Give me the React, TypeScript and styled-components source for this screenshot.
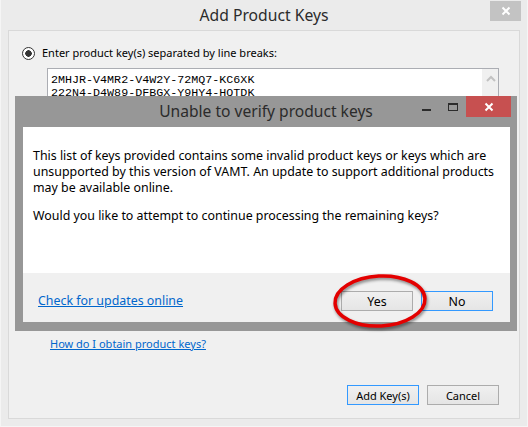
import styled, { createGlobalStyle } from "styled-components";

const GlobalStyle = createGlobalStyle`
  html, body {
    margin: 0;
    padding: 0;
    background: #ebebeb;
  }
  body {
    font-family: "Noto Sans", "Open Sans", sans-serif;
    color: #000;
  }
`;

const keys = ["2MHJR-V4MR2-V4W2Y-72MQ7-KC6XK", "222N4-D4W89-DFBGX-Y9HY4-HQTDK"];

export default function App() {
  return (
    <>
      <GlobalStyle />
      <Window>
        <TitleBar>
          <span />
          <Title>Add Product Keys</Title>
          <OuterClose>
            <CloseGlyph />
          </OuterClose>
        </TitleBar>
        <Client>
          <RadioRow>
            <Radio />
            <Label>Enter product key(s) separated by line breaks:</Label>
          </RadioRow>
          <KeyBox>
            <KeyText>
              {keys.map((k) => (
                <div key={k}>{k}</div>
              ))}
            </KeyText>
            <ScrollBar>
              <svg width="16" height="16" viewBox="0 0 16 16">
                <polyline points="5,10 9,6 13,10" fill="none" stroke="#c2c2c2" strokeWidth="2" />
              </svg>
            </ScrollBar>
          </KeyBox>
          <HelpLink>How do I obtain product keys?</HelpLink>
          <ButtonRow>
            <Button $focused>Add Key(s)</Button>
            <Button>Cancel</Button>
          </ButtonRow>
        </Client>

        <Modal>
          <ModalTitleBar>
            <span />
            <ModalTitle>Unable to verify product keys</ModalTitle>
            <Caption>
              <CaptionButton $w={27}>
                <svg width="27" height="21" viewBox="0 0 27 21">
                  <rect x="9" y="13" width="9" height="2" fill="#2b2b2b" />
                </svg>
              </CaptionButton>
              <CaptionButton $w={26}>
                <svg width="26" height="21" viewBox="0 0 26 21">
                  <rect x="8.5" y="7.5" width="9" height="7" fill="none" stroke="#2b2b2b" strokeWidth="1" />
                  <rect x="8" y="7" width="10" height="2" fill="#2b2b2b" />
                </svg>
              </CaptionButton>
              <CaptionButton $w={45} $close>
                <CloseGlyph />
              </CaptionButton>
            </Caption>
          </ModalTitleBar>
          <ModalBody>
            <Paragraph>
              This list of keys provided contains some invalid product keys or keys which are
              <br />
              unsupported by this version of VAMT. An update to support additional products
              <br />
              may be available online.
            </Paragraph>
            <Paragraph>Would you like to attempt to continue processing the remaining keys?</Paragraph>
          </ModalBody>
          <ModalFooter>
            <FooterLink>Check for updates online</FooterLink>
            <FooterButtons>
              <Button>Yes</Button>
              <Button $focused>No</Button>
            </FooterButtons>
          </ModalFooter>
        </Modal>

        <Highlight width="110" height="66" viewBox="0 0 110 66">
          <ellipse
            cx="54"
            cy="33"
            rx="45"
            ry="25"
            fill="none"
            stroke="#e30000"
            strokeWidth="3.5"
            transform="rotate(-3 54 33)"
          />
        </Highlight>
      </Window>
    </>
  );
}

function CloseGlyph() {
  return (
    <svg width="10" height="10" viewBox="0 0 10 10">
      <path d="M1.5 1.5 L8.5 8.5 M8.5 1.5 L1.5 8.5" stroke="#fff" strokeWidth="2" />
    </svg>
  );
}

const Window = styled.div`
  position: relative;
  width: 528px;
  height: 427px;
  box-sizing: border-box;
  display: flex;
  flex-direction: column;
  padding: 0 7px 7px 7px;
  background: #ebebeb;
  border-left: 1px solid #f5f5f5;
  border-right: 1px solid #f5f5f5;
  border-bottom: 1px solid #f5f5f5;
  overflow: hidden;
`;

const TitleBar = styled.div`
  height: 30px;
  margin: 0 -1px 0 -1px;
  display: grid;
  grid-template-columns: 1fr auto 1fr;
  align-items: start;
`;

const Title = styled.div`
  font-size: 15.7px;
  line-height: 30px;
  color: #2b2b2b;
`;

const OuterClose = styled.div`
  justify-self: end;
  margin-top: 1px;
  width: 31px;
  height: 20px;
  background: #c3c3c3;
  display: flex;
  align-items: center;
  justify-content: center;
`;

const Client = styled.div`
  flex: 1;
  display: flex;
  flex-direction: column;
  background: #f0f0f0;
  border: 1px solid #d9d9d9;
  padding: 14px 20px 13px 13px;
  font-size: 11px;
`;

const RadioRow = styled.div`
  display: flex;
  align-items: center;
  gap: 7px;
  height: 16px;
`;

const Radio = styled.div`
  width: 11px;
  height: 11px;
  border-radius: 50%;
  border: 1px solid #333;
  background: radial-gradient(circle, #333 0 3px, #fff 3.5px);
`;

const Label = styled.span`
  line-height: 16px;
  white-space: nowrap;
`;

const KeyBox = styled.div`
  margin: 7px 0 0 25px;
  height: 256px;
  display: flex;
  background: #fff;
  border: 1px solid #abadb3;
`;

const KeyText = styled.div`
  flex: 1;
  padding: 5px 0 0 3px;
  font-family: "Liberation Mono", monospace;
  font-size: 11.7px;
  line-height: 13px;
  color: #000;
`;

const ScrollBar = styled.div`
  width: 16px;
  background: #f0f0f0;
  display: flex;
  flex-direction: column;
  padding-top: 2px;
`;

const HelpLink = styled.a`
  margin: 10px 0 0 28px;
  line-height: 16px;
  color: #0066cc;
  text-decoration: underline;
  align-self: flex-start;
`;

const ButtonRow = styled.div`
  margin-top: auto;
  display: flex;
  justify-content: flex-end;
  gap: 8px;
`;

const Button = styled.div<{ $focused?: boolean }>`
  width: 72px;
  height: 20px;
  box-sizing: border-box;
  display: flex;
  align-items: center;
  justify-content: center;
  font-size: inherit;
  color: #000;
  border: 1px solid ${(p) => (p.$focused ? "#3399ff" : "#acacac")};
  background: linear-gradient(#f0f0f0, #e5e5e5);
`;

const Modal = styled.div`
  position: absolute;
  left: 14px;
  top: 96px;
  width: 502px;
  height: 235px;
  box-sizing: border-box;
  display: flex;
  flex-direction: column;
  background: #979797;
  padding: 0 7px 9px 8px;
  font-size: 12.4px;
`;

const ModalTitleBar = styled.div`
  height: 31px;
  margin: 0 -7px 0 -8px;
  display: grid;
  grid-template-columns: 1fr auto 1fr;
  align-items: start;
`;

const ModalTitle = styled.div`
  font-size: 15.6px;
  line-height: 31px;
  color: #2b2b2b;
`;

const Caption = styled.div`
  justify-self: end;
  display: flex;
  padding-right: 6px;
`;

const CaptionButton = styled.div<{ $w: number; $close?: boolean }>`
  width: ${(p) => p.$w}px;
  height: 21px;
  display: flex;
  align-items: center;
  justify-content: center;
  background: ${(p) => (p.$close ? "#c75050" : "transparent")};
`;

const ModalBody = styled.div`
  height: 146px;
  box-sizing: border-box;
  background: #fff;
  padding: 21px 10px 0 10px;
`;

const Paragraph = styled.p`
  margin: 0 0 12px 0;
  line-height: 16px;
  white-space: nowrap;
`;

const ModalFooter = styled.div`
  flex: 1;
  background: #f0f0f0;
  display: flex;
  align-items: center;
  justify-content: space-between;
  padding: 7px 17px 0 15px;
`;

const FooterLink = styled.a`
  line-height: 16px;
  color: #0066cc;
  text-decoration: underline;
`;

const FooterButtons = styled.div`
  display: flex;
  gap: 8px;
`;

const Highlight = styled.svg`
  position: absolute;
  left: 325px;
  top: 268px;
  overflow: visible;
  filter: drop-shadow(1px 2px 1.5px rgba(0, 0, 0, 0.45));
`;
